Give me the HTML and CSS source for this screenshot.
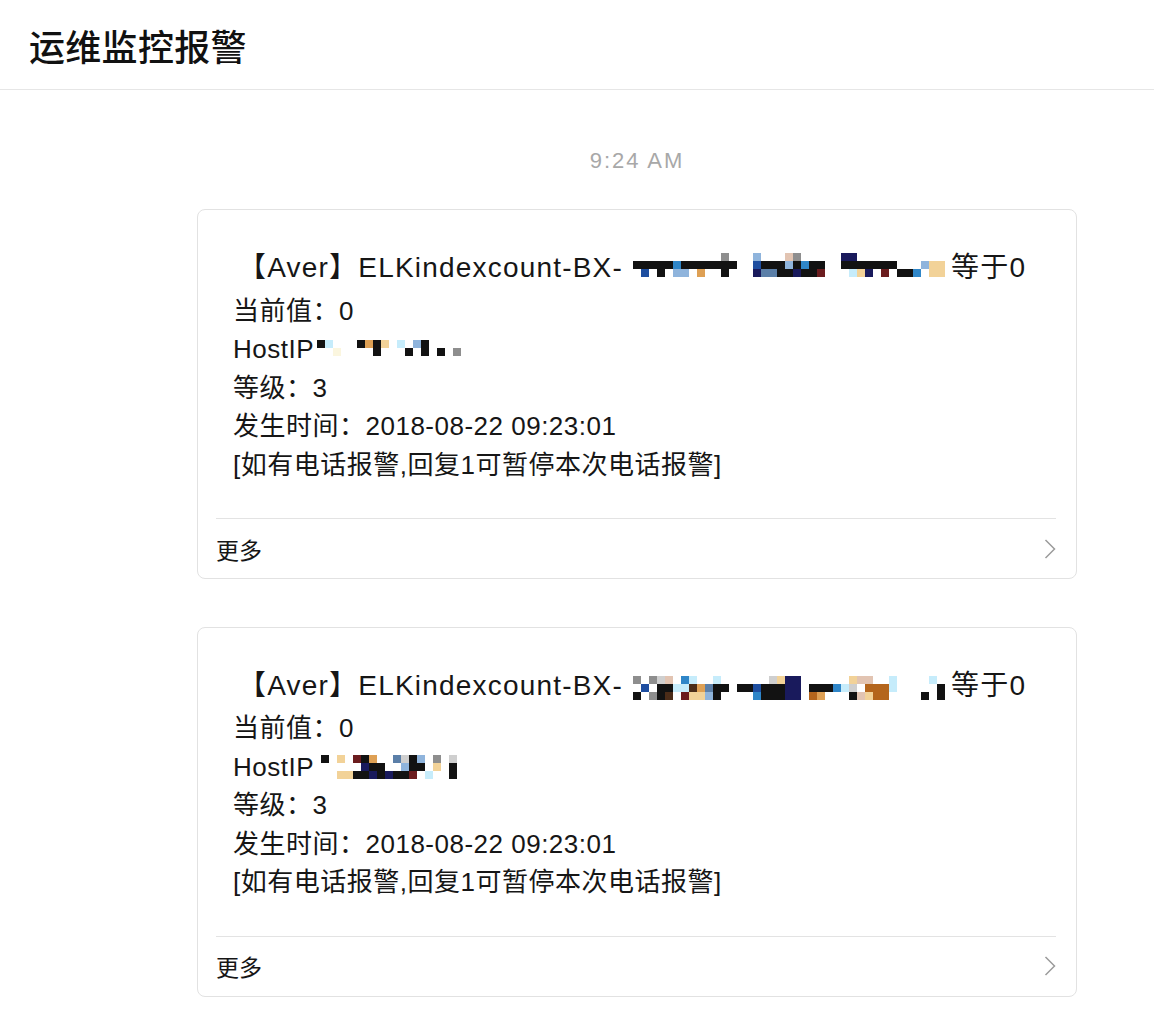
FILE: index.html
```html
<!DOCTYPE html>
<html lang="zh-CN">
<head>
<meta charset="utf-8">
<title>运维监控报警</title>
<link rel="stylesheet" href="styles.css">
</head>
<body>
<header class="topbar">
  <h1 class="topbar-title">运维监控报警</h1>
</header>
<main class="chat">
  <div class="timestamp">9:24 AM</div>

  <article class="card">
    <div class="card-body">
      <div class="card-title">【Aver】ELKindexcount-BX-<span class="mosaic m3 gap-l lift-5" data-cols="wkw wkb wkw wkk wkw wBl wkl wkw wko wkw wkw gkk wkw www www lbn wks wks wkk plk gkn wBk wkk wkr www www nkw nkc wkt wkn wkw wkr wkw wwk wwk wwB wlw wtt wtt"></span>等于0</div>
      <div class="line">当前值：0</div>
      <div class="line">HostIP<span class="mosaic m2 gap-s lift-3" data-cols="kw cw wy ww ww kw ow kk tw ww cw wk lw kk ww wk ww wg"></span></div>
      <div class="line">等级：3</div>
      <div class="line">发生时间：2018-08-22 09:23:01</div>
      <div class="line">[如有电话报警,回复1可暂停本次电话报警]</div>
    </div>
    <div class="card-foot">
      <span class="more">更多</span>
      <svg class="chevron" width="12" height="20" viewBox="0 0 12 20" aria-hidden="true"><polyline points="1.5,1 10.5,10 1.5,19" fill="none" stroke="#9b9b9b" stroke-width="1.5"/></svg>
    </div>
  </article>

  <article class="card">
    <div class="card-body">
      <div class="card-title">【Aver】ELKindexcount-BX-<span class="mosaic m3 gap-l" data-cols="gwk wbw gwg Gkk pkd wcw Bcr cdt wot wsl ckk wkw www wkw wkw wbB wkk Gkk tkk nnn nnn www wkO wko wkw wBw wcw tGk pwp pOt wOO wOO ccw www www www wwk cww wkk"></span>等于0</div>
      <div class="line">当前值：0</div>
      <div class="line">HostIP <span class="mosaic m3 lift-2" data-cols="kww www twt wwt rwk knk okn wkk wwn swk Glk kkr lkw wwc gtw www Gkk"></span></div>
      <div class="line">等级：3</div>
      <div class="line">发生时间：2018-08-22 09:23:01</div>
      <div class="line">[如有电话报警,回复1可暂停本次电话报警]</div>
    </div>
    <div class="card-foot">
      <span class="more">更多</span>
      <svg class="chevron" width="12" height="20" viewBox="0 0 12 20" aria-hidden="true"><polyline points="1.5,1 10.5,10 1.5,19" fill="none" stroke="#9b9b9b" stroke-width="1.5"/></svg>
    </div>
  </article>
</main>
<script src="script.js"></script>
</body>
</html>
```

FILE: styles.css
```css
html, body {
  margin: 0;
  padding: 0;
  background: #ffffff;
}

body {
  font-family: "Liberation Sans", "Noto Sans CJK SC", sans-serif;
  color: #161616;
}

.topbar {
  height: 89px;
  border-bottom: 1px solid #e6e6e6;
  display: flex;
  align-items: center;
  padding-left: 29px;
}

.topbar-title {
  margin: 0;
  font-family: "Noto Sans CJK SC", sans-serif;
  font-size: 36px;
  font-weight: 500;
  letter-spacing: 0.3px;
  color: #111;
}

.chat {
  width: 880px;
  margin-left: 197px;
  padding-top: 56px;
  padding-bottom: 20px;
}

.timestamp {
  text-align: center;
  font-size: 22px;
  line-height: 30px;
  color: #a8a8a8;
  letter-spacing: 2px;
  margin-bottom: 33px;
}

.card {
  border: 1px solid #e2e2e2;
  border-radius: 8px;
  margin-bottom: 48px;
  background: #fff;
}

.card-body {
  padding: 40px 20px 34px 35px;
}

.card-title {
  font-size: 28px;
  line-height: 36px;
  margin-bottom: 5px;
  padding-left: 5px;
  letter-spacing: 1.2px;
  white-space: nowrap;
}

.line {
  font-size: 26px;
  line-height: 38.5px;
  letter-spacing: 0.5px;
  white-space: nowrap;
}

.card-foot {
  margin: 0 20px 0 18px;
  border-top: 1px solid #e3e3e3;
  height: 59px;
  display: flex;
  align-items: center;
  justify-content: space-between;
}

.more {
  font-family: "Noto Sans CJK SC", sans-serif;
  font-size: 23px;
  color: #161616;
}

.chevron {
  display: block;
}

/* pixelated redaction mosaic */
.mosaic {
  display: inline-grid;
  grid-auto-flow: column;
  grid-auto-columns: 8px;
  vertical-align: middle;
}

.m2 { grid-template-rows: repeat(2, 8px); }
.m3 { grid-template-rows: repeat(3, 8px); }

.gap-l { margin-left: 10px; margin-right: 6px; }
.gap-s { margin-left: 3px; }

/* raise a mosaic by half its bottom margin (middle alignment uses the margin box) */
.lift-2 { margin-bottom: 4px; }
.lift-3 { margin-bottom: 6px; }
.lift-5 { margin-bottom: 10px; }

.mosaic i { display: block; width: 8px; height: 8px; }
.px-w { background: transparent; }
.px-k { background: #121212; }
.px-b { background: #1e4ea0; }
.px-B { background: #2f86c8; }
.px-l { background: #8fb4dc; }
.px-c { background: #c6ecfb; }
.px-o { background: #dea054; }
.px-t { background: #f2d298; }
.px-p { background: #e2c4b2; }
.px-g { background: #8e8e8e; }
.px-G { background: #cfcfcf; }
.px-n { background: #191a5c; }
.px-r { background: #6b1c1e; }
.px-s { background: #5b7fa8; }
.px-y { background: #fbf6df; }
.px-O { background: #b4651c; }
.px-d { background: #4b2c18; }
```

FILE: script.js
```js
document.querySelectorAll('.mosaic').forEach(function (m) {
  var cols = m.getAttribute('data-cols').trim().split(/\s+/);
  cols.forEach(function (col) {
    for (var i = 0; i < col.length; i++) {
      var cell = document.createElement('i');
      cell.className = 'px-' + col.charAt(i);
      m.appendChild(cell);
    }
  });
});
```
